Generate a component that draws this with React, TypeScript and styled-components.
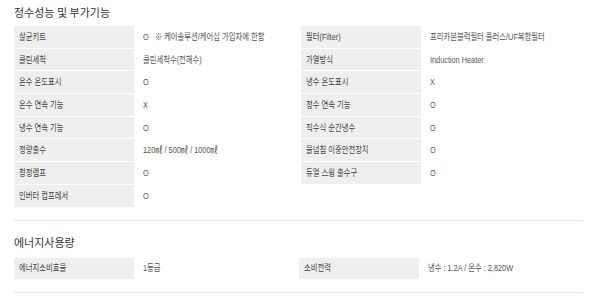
import React from "react";
import styled, { createGlobalStyle } from "styled-components";

const Global = createGlobalStyle`
  html, body { margin: 0; padding: 0; background: #ffffff; }
  body { font-family: "Noto Sans CJK KR", "Noto Sans", sans-serif; }
`;

const Page = styled.div`
  width: 600px;
  padding: 0 17px 0 14px;
  box-sizing: border-box;
`;

const Section = styled.section<{ $padTop: number }>`
  padding-top: ${(p) => p.$padTop}px;
  padding-bottom: 13px;
  border-bottom: 1px solid #e6e6e6;
`;

const Heading = styled.h2<{ $gap: number }>`
  margin: 0 0 ${(p) => p.$gap}px 0;
  height: 24px;
  line-height: 24px;
  font-family: "Noto Sans CJK KR", "Noto Sans", sans-serif;
  font-size: 11px;
  font-weight: 400;
  color: #333333;
`;

const Columns = styled.div`
  display: grid;
  grid-template-columns: 1fr 1fr;
`;

const Column = styled.div`
  display: flex;
  flex-direction: column;
  gap: 1px;
`;

const Row = styled.div`
  display: grid;
  grid-template-columns: 120px 1fr;
  height: 21.7px;
`;

const Label = styled.div`
  display: flex;
  align-items: center;
  padding-left: 5px;
  background: #efefef;
  color: #444444;
  overflow: hidden;
`;

const Value = styled.div`
  display: flex;
  align-items: center;
  padding-left: 9px;
  color: #555555;
  white-space: nowrap;
`;

const Txt = styled.span`
  display: inline-block;
  font-family: "Liberation Sans", "Noto Sans CJK KR", sans-serif;
  font-size: 9.5px;
  line-height: 12px;
  white-space: nowrap;
  transform: scaleX(0.77);
  transform-origin: left center;
`;

type Spec = [string, string];

const left1: Spec[] = [
  ["살균키트", "O\u00a0\u00a0\u00a0※ 케어솔루션/케어십 가입자에 한함"],
  ["클린세척", "클린세척수(전해수)"],
  ["온수 온도표시", "O"],
  ["온수 연속 기능", "X"],
  ["냉수 연속 기능", "O"],
  ["정량출수", "120㎖ / 500㎖ / 1000㎖"],
  ["청정램프", "O"],
  ["인버터 컴프레서", "O"],
];

const right1: Spec[] = [
  ["필터(Filter)", "프리카본블럭필터 플러스/UF복합필터"],
  ["가열방식", "Induction Heater"],
  ["냉수 온도표시", "X"],
  ["정수 연속 기능", "O"],
  ["직수식 순간냉수", "O"],
  ["물넘침 이중안전장치", "O"],
  ["듀얼 스윙 출수구", "O"],
];

const left2: Spec[] = [["에너지소비효율", "1등급"]];
const right2: Spec[] = [["소비전력", "냉수 : 1.2A / 온수 : 2,820W"]];

function SpecColumn({ items }: { items: Spec[] }) {
  return (
    <Column>
      {items.map(([k, v]) => (
        <Row key={k}>
          <Label>
            <Txt>{k}</Txt>
          </Label>
          <Value>
            <Txt>{v}</Txt>
          </Value>
        </Row>
      ))}
    </Column>
  );
}

export default function App() {
  return (
    <>
      <Global />
      <Page>
        <Section $padTop={0}>
          <Heading $gap={2}>정수성능 및 부가기능</Heading>
          <Columns>
            <SpecColumn items={left1} />
            <SpecColumn items={right1} />
          </Columns>
        </Section>
        <Section $padTop={9}>
          <Heading $gap={4}>에너지사용량</Heading>
          <Columns>
            <SpecColumn items={left2} />
            <SpecColumn items={right2} />
          </Columns>
        </Section>
      </Page>
    </>
  );
}
